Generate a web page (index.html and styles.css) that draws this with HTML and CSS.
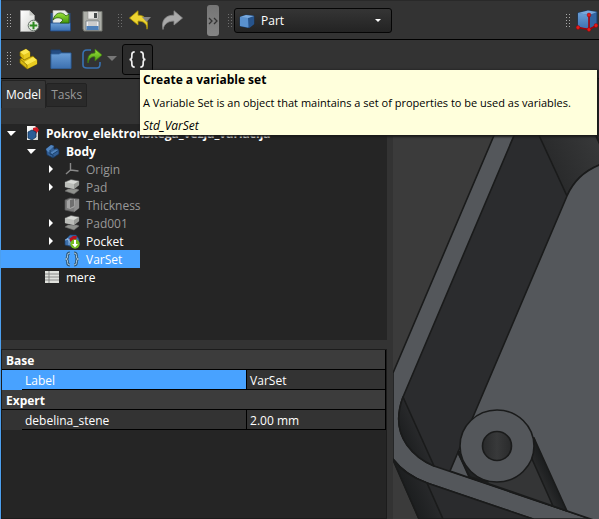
FILE: index.html
```html
<!DOCTYPE html>
<html lang="en">
<head>
<meta charset="utf-8">
<meta name="viewport" content="width=device-width, initial-scale=1">
<title>Part workbench</title>
<link rel="stylesheet" href="styles.css">
</head>
<body>
<svg class="defs" aria-hidden="true">
  <defs>
    <linearGradient id="paper" x1="0" y1="0" x2="1" y2="1"><stop offset="0" stop-color="#fff"/><stop offset="1" stop-color="#d2d4d0"/></linearGradient>
    <linearGradient id="blue" x1="0" y1="0" x2="0" y2="1"><stop offset="0" stop-color="#6a9ed6"/><stop offset="1" stop-color="#3c70b0"/></linearGradient>
    <linearGradient id="green" x1="0" y1="0" x2="0" y2="1"><stop offset="0" stop-color="#9be33b"/><stop offset="1" stop-color="#43960b"/></linearGradient>
    <symbol id="pad" viewBox="0 0 16 16">
      <path d="M1 12l3-2h9l2 1-5 4z" fill="#8f918d" stroke="#6b6b6b" stroke-width=".6"/>
      <path d="M1 3l6-2.500 8 1.500v4l-5 4-9-2z" fill="#d8dad6" stroke="#555" stroke-width=".6"/>
      <path d="M1 3l9 2v5l-9-2z" fill="#bbbdb9"/><path d="M10 5l5-3v4l-5 4z" fill="#999b97"/>
    </symbol>
  </defs>
</svg>

<header class="toolbars">
  <div class="toolbar">
    <div class="group">
      <span class="handle"></span>
      <button class="tool" aria-label="New"><svg viewBox="0 0 22 22"><path d="M2.500.500h9l5 5v16h-14z" fill="url(#paper)" stroke="#aaa" stroke-width=".6"/><path d="M11.500.500v5h5z" fill="#c3c5c1"/><circle cx="15.500" cy="15.500" r="5.300" fill="#e4e8df" stroke="#66736a"/><path d="M15.500 11.700v7.600M11.700 15.500h7.600" stroke="#2c8a1f" stroke-width="2"/></svg></button>
      <button class="tool" aria-label="Open"><svg viewBox="0 0 22 22"><path d="M.500 3h20v17H.500z" fill="#284f82"/><path d="M3 .500h12l4 4V15H3z" fill="#e9ebe8" stroke="#aaa" stroke-width=".6"/><path d="M.500 13h20v8H.500z" fill="url(#blue)" stroke="#204a87" stroke-width=".8"/><path d="M3 10C5 2 12 1 16 6l3-2v9h-9l3-3C10 7 6 7 3 10z" fill="url(#green)" stroke="#285d10" stroke-width=".8"/></svg></button>
      <button class="tool" aria-label="Save"><svg viewBox="0 0 22 22"><path d="M1 1.500h19V21H2l-1-2z" fill="#adafa9" stroke="#72746f"/><path d="M6 1.500h10V9H6z" fill="#e8e8e5" stroke="#888" stroke-width=".5"/><path d="M12 3h3v5h-3z" fill="#45494a"/><path d="M4 11h13v9H4z" fill="#eee" stroke="#707982" stroke-width=".8"/><path d="M4.500 16h12v4h-12z" fill="#4e80b9"/><path d="M6 13h9M6 15h9" stroke="#aaa"/></svg></button>
    </div>
    <div class="group">
      <span class="handle dim"></span>
      <button class="tool" aria-label="Undo"><svg viewBox="0 0 22 22"><path d="M.500 8L9 .800v4.400c7 0 11 5 9 14C18 14 15 11 9 11v4z" fill="#edd431" stroke="#b49b05" stroke-width=".8"/><path d="M13 7h9l-4.500 5z" fill="#858585"/></svg></button>
      <button class="tool" aria-label="Redo"><svg viewBox="0 0 22 22"><path d="M21.500 8L13 .800v4.400C4 5 0 11 2 19.500 3 14 7 11 13 11v4z" fill="#aaa" stroke="#888" stroke-width=".8"/></svg></button>
    </div>
    <button class="more" aria-label="More tools"><svg viewBox="0 0 12 8"><path d="M2 1l3 3-3 3M7 1l3 3-3 3" fill="none" stroke="#333" stroke-width="1.300"/></svg></button>
    <div class="group workbench">
      <span class="handle dim"></span>
      <div class="combo">
        <svg class="combo-icon" viewBox="0 0 16 14"><path d="M1 3l6-2 8 1v8l-5 4-9-2z" fill="#3f75b5" stroke="#193f70" stroke-width=".7"/><path d="M1 3l8 1v9.500L1 12z" fill="#5991cf"/><path d="M9 4l6-2v8l-5 3.500z" fill="#27548c"/><path d="M1 3l6-2 8 1-6 2z" fill="#7babdf"/></svg>
        <select aria-label="Workbench"><option>Part</option></select>
      </div>
    </div>
    <div class="group primitives">
      <span class="handle"></span>
      <button class="tool" aria-label="Box"><svg viewBox="0 0 22 22"><path d="M2 3l10-2.500L21 2v13l-8 4.500L2 17z" fill="#3265a2" stroke="#173d69"/><path d="M2 3l11 2v14L2 17z" fill="url(#blue)"/><path d="M2 3l10-2.500L21 2l-8 3z" fill="#79a8dc"/><path d="M2 17.500l11 2 7.500-4M13 5v14" fill="none" stroke="#a60008" stroke-width="1.600"/><g fill="#e51b1b" stroke="#8e0000" stroke-width=".5"><circle cx="13" cy="5" r="1.900"/><circle cx="2" cy="17.500" r="1.900"/><circle cx="13" cy="19.500" r="1.900"/><circle cx="20" cy="15.500" r="1.900"/></g></svg></button>
    </div>
  </div>

  <div class="toolbar second">
    <div class="group">
      <span class="handle"></span>
      <button class="tool" aria-label="Create part"><svg viewBox="0 0 22 22"><path d="M2 4l6-3 4 3v5l3-1 4 4v4L9 21l-7-6v-4l2-1-2-2z" fill="#d8b912" stroke="#796400" stroke-width=".8"/><path d="M2 4l6-3 4 3-6 3zM6 14l9-5 4 3-10 5z" fill="#fbe750"/><path d="M6 7l6-3v5l-6 3zM9 17l10-5v4L9 21z" fill="#e8cb20"/><path d="M2 8l4 4 6-3M2 11l7 6v4" fill="none" stroke="#826c00" stroke-width=".7"/></svg></button>
      <button class="tool" aria-label="Create group"><svg viewBox="0 0 22 22"><path d="M1 2h9l2 3h9v15H1z" fill="#244d83" stroke="#1d416e"/><path d="M1 6h8l2-1h10v15.500H1z" fill="url(#blue)" stroke="#315f98" stroke-width=".8"/></svg></button>
      <button class="tool" aria-label="Make link"><svg viewBox="0 0 22 22"><path d="M9 2H5Q1 2 1 6v11q0 3 4 3h10q3 0 3-4v-2" fill="none" stroke="#3872b2" stroke-width="1.600"/><path d="M6 15C5 8 8 5 13 5V1l7 6-7 6V9c-3-1-6 1-7 6z" fill="url(#green)" stroke="#3f7812" stroke-width=".8"/></svg></button>
      <svg class="drop" viewBox="0 0 10 6" aria-hidden="true"><path d="M0 0h10L5 5z" fill="#777"/></svg>
      <button class="tool active" aria-label="Create a variable set"><svg viewBox="0 0 18 18"><path d="M6 1Q3 1 3 4v2q0 3-2.500 3Q3 9 3 12v2q0 3 3 3M12 1q3 0 3 3v2q0 3 2.500 3Q15 9 15 12v2q0 3-3 3" fill="none" stroke="#eee" stroke-width="1.800"/></svg></button>
    </div>
  </div>
</header>

<main class="workspace">
  <section class="side">
    <div class="tabs" role="tablist">
      <button class="tab current" role="tab" aria-selected="true">Model</button>
      <button class="tab" role="tab" aria-selected="false">Tasks</button>
    </div>
    <ul class="tree">
      <li class="root"><span class="arrow open"></span><svg viewBox="0 0 16 16"><path d="M3 1h8l3 3v11H3z" fill="url(#paper)"/><path d="M9 3l4-1 2 3-3 4-3-1z" fill="#d11c25"/><path d="M4 7l4-2 4 2v5l-4 3-4-2z" fill="#2b5d96" stroke="#143657" stroke-width=".8"/></svg><b>Pokrov_elektronskega_vezja_variacija</b></li>
      <li class="child"><span class="arrow open"></span><svg viewBox="0 0 16 16"><path d="M2 6l5-4 3 1v3l3-1 2 2v4l-6 4-6-3z" fill="#325f95" stroke="#152f50" stroke-width=".8"/><path d="M2 6l5-4 3 1-4 4v3l5-3 4 0-6 4-6-3z" fill="#5386bf"/><path d="M6 7v4l3 1v3M9 11l6-4" fill="none" stroke="#1b4069"/></svg><b>Body</b></li>
      <li class="leaf"><span class="arrow"></span><svg viewBox="0 0 16 16"><path d="M6.500 2v7L2 13M6.500 9l8 1" fill="none" stroke="#888" stroke-width="1.400"/></svg><span class="label">Origin</span></li>
      <li class="leaf"><span class="arrow"></span><svg><use href="#pad"/></svg><span class="label">Pad</span></li>
      <li class="leaf"><span class="arrow none"></span><svg viewBox="0 0 16 16"><path d="M1 3l5-2 9 1v9l-5 4-9-2z" fill="#7c7c7c" stroke="#555" stroke-width=".7"/><path d="M3 4l3-2h5v8l-5 2-3-1z" fill="#a4a4a4"/><path d="M6 3l4-1v7l-4 2z" fill="#6f6f6f"/><path d="M11 4l4-2v9l-5 4z" fill="#8e8e8e"/></svg><span class="label">Thickness</span></li>
      <li class="leaf"><span class="arrow"></span><svg><use href="#pad"/></svg><span class="label">Pad001</span></li>
      <li class="leaf bright"><span class="arrow"></span><svg viewBox="0 0 16 16"><path d="M1 7l5-5 6 0 3 4v6L9 14l-8-2z" fill="#3c70ad" stroke="#183d6c" stroke-width=".7"/><path d="M5 6l4-3h4l-1 4-5 2z" fill="#b8131e"/><path d="M1 7l4-1v6M3 5l4 6" fill="none" stroke="#8db5df"/><circle cx="11" cy="11" r="4.700" fill="#75bd20"/><path d="M10 7h2v4h2l-3 3.500L8 11h2z" fill="#fff"/></svg><span class="label">Pocket</span></li>
      <li class="leaf bright selected"><span class="arrow none"></span><svg viewBox="0 0 16 16"><path d="M6 2Q3.500 2 3.500 4.500v1.500q0 2-2 2 2 0 2 2v1.500Q3.500 14 6 14M10 2q2.500 0 2.500 2.500V6q0 2 2 2-2 0-2 2v1.500q0 2.500-2.500 2.500" fill="none" stroke="#315b7d" stroke-width="2.800"/><path d="M6 2Q3.500 2 3.500 4.500v1.500q0 2-2 2 2 0 2 2v1.500Q3.500 14 6 14M10 2q2.500 0 2.500 2.500V6q0 2 2 2-2 0-2 2v1.500q0 2.500-2.500 2.500" fill="none" stroke="#a9c6d9"/></svg><span class="label">VarSet</span></li>
      <li class="child bright"><span class="arrow none"></span><svg viewBox="0 0 16 16"><path d="M1 2h14v12H1z" fill="#e0e2dd"/><path d="M1 5h14M1 8h14M1 11h14M5 2v12" stroke="#777" stroke-width=".8"/></svg><span class="label">mere</span></li>
    </ul>
    <div class="properties">
      <table>
        <colgroup><col class="name-col"><col></colgroup>
        <tbody>
          <tr><th colspan="2" scope="rowgroup">Base</th></tr>
          <tr class="chosen"><td class="name"><span>Label</span></td><td>VarSet</td></tr>
          <tr><th colspan="2" scope="rowgroup">Expert</th></tr>
          <tr><td class="name"><span>debelina_stene</span></td><td>2.00 mm</td></tr>
        </tbody>
      </table>
    </div>
  </section>

  <section class="viewport" aria-label="3D view">
    <svg viewBox="393 79 206 440" preserveAspectRatio="xMinYMin slice">
      <defs>
        <linearGradient id="corner" gradientUnits="userSpaceOnUse" x1="554" y1="165" x2="596" y2="145"><stop offset="0" stop-color="#2a2b2c"/><stop offset="1" stop-color="#363738"/></linearGradient>
        <linearGradient id="bend" gradientUnits="userSpaceOnUse" x1="396" y1="438" x2="421" y2="427"><stop offset="0" stop-color="#191b1c"/><stop offset="1" stop-color="#2b2c2e"/></linearGradient>
        <linearGradient id="outside" gradientUnits="userSpaceOnUse" x1="402" y1="491" x2="431" y2="479"><stop offset="0" stop-color="#1a1c1d"/><stop offset="1" stop-color="#2a2b2d"/></linearGradient>
        <linearGradient id="post" gradientUnits="userSpaceOnUse" x1="536" y1="482" x2="550" y2="475"><stop offset="0" stop-color="#303132"/><stop offset="1" stop-color="#1c1e1f"/></linearGradient>
        <linearGradient id="hole" x1="0" y1="0" x2="1" y2="0"><stop offset="0" stop-color="#292a2b"/><stop offset=".5" stop-color="#38393a"/><stop offset="1" stop-color="#292a2b"/></linearGradient>
      </defs>
      <path d="M393 79h206v440H393z" fill="#3b3b3b"/>
      <g stroke="#1a1b1b" stroke-width="1.600" stroke-linejoin="round">
        <path d="M518 79L393 373V459Q405 475 427 483L533 519H620V79z" fill="#54575b"/>
        <path d="M538 79L403 397C396 416 397 431 407 445Q417 459 434 466L620 529V79z" fill="#2b2c2e"/>
        <path d="M513 79L567 196Q577 173 602 164V148L571 79z" fill="url(#corner)"/>
        <path d="M596 136l6 13" fill="none"/>
        <path d="M620 79V529L450 471L567 196Q577 173 602 164L620 79z" fill="#54575b" stroke="none"/>
        <path d="M620 529L450 471L567 196Q577 173 602 164" fill="none"/>
        <path d="M403 397C396 416 397 431 407 445Q417 459 434 466z" fill="url(#bend)"/>
        <path d="M458 452L469 477L553 506L534 438z" fill="#343536"/>
        <path d="M534 438L567 511L553 506L532 459z" fill="url(#post)"/>
        <path d="M459 452l-1 1 12 24 18 5z" fill="#202223"/>
        <ellipse cx="497" cy="446" rx="37" ry="36" fill="#54575b"/>
        <circle cx="497" cy="446" r="14.500" fill="url(#hole)"/>
        <path d="M393 459Q405 475 427 483L533 519H419z" fill="#2a2b2d"/>
        <path d="M393 460Q405 475 427 483L443 519H419z" fill="url(#outside)"/>
      </g>
    </svg>
  </section>
</main>

<div class="tooltip" role="tooltip">
  <b>Create a variable set</b>
  <span>A Variable Set is an object that maintains a set of properties to be used as variables.</span>
  <i>Std_VarSet</i>
</div>
</body>
</html>
```
FILE: styles.css
```css
* { box-sizing: border-box; }

body {
  margin: 0;
  height: 100vh;
  display: flex;
  flex-direction: column;
  position: relative;
  overflow: hidden;
  background: #333;
  border-left: 1px solid #4c9fee;
  color: #fff;
  font: 12px/18px "Open Sans", "Noto Sans", sans-serif;
}

button, select { font: inherit; color: inherit; }
button { border: 0; padding: 0; background: none; }
.defs { position: absolute; width: 0; height: 0; }

/* Toolbars */
.toolbar {
  display: flex;
  align-items: center;
  height: 40px;
  padding: 2px 0 0 5px;
  border-bottom: 1px solid #000;
  box-shadow: inset 0 1px #292929;
}
.toolbar.second { height: 39px; padding-top: 0; box-shadow: none; }
.group { display: flex; align-items: center; }
.group + .group { margin-left: 13px; }
.handle {
  width: 6px;
  height: 16px;
  margin-right: 6px;
  background: radial-gradient(circle, #aaa 1px, transparent 1px) 0 0 / 3px 3px;
}
.handle.dim { opacity: .5; }
.tool { width: 22px; height: 22px; flex: none; }
.tool + .tool { margin-left: 10px; }
.tool svg { display: block; width: 100%; height: 100%; }
.more {
  width: 12px;
  height: 31px;
  margin-left: 24px;
  border-radius: 3px;
  background: linear-gradient(#757575, #858585);
}
.more svg { display: block; width: 12px; height: 8px; }
.group.workbench { margin-left: 8px; }
.workbench .handle { margin-right: 1px; }
.group.primitives { margin-left: auto; padding-right: 1px; }
.primitives .handle { margin-right: 5px; }
.combo {
  display: flex;
  align-items: center;
  position: relative;
  width: 158px;
  height: 25px;
  border: 1px solid #050505;
  border-radius: 3px;
  background: linear-gradient(#353535, #232323);
}
.combo-icon { position: absolute; left: 4px; width: 16px; height: 14px; pointer-events: none; }
.combo select {
  width: 100%;
  height: 100%;
  padding: 0 0 0 26px;
  border: 0;
  appearance: none;
  background: none;
}
.combo::after {
  content: "";
  position: absolute;
  right: 10px;
  border: 3px solid transparent;
  border-top-color: #fff;
  border-bottom: 0;
  pointer-events: none;
}
.drop { width: 10px; height: 6px; margin: 0 5px 0 3px; }
.tool.active {
  width: 31px;
  height: 31px;
  padding: 6px;
  border: 1px solid #050505;
  border-radius: 3px;
  background: #2b2b2b;
}

/* Side panel */
.workspace { flex: 1; min-height: 0; display: grid; grid-template-columns: 386px 1fr; column-gap: 6px; }
.side { display: flex; flex-direction: column; min-height: 0; }
.tabs { display: flex; align-items: flex-start; height: 45px; }
.tab {
  height: 24px;
  margin-top: 4px;
  padding: 0 4px;
  border: 1px solid #222;
  border-radius: 2px 2px 0 0;
  background: #2a2a2a;
  color: #999;
}
.tab.current { height: 28px; margin-top: 1px; background: #373737; color: #fff; border-bottom: 0; }
.tree { flex: none; height: 216px; margin: 0; padding: 0; list-style: none; background: #252525; color: #999; }
.tree li { display: flex; align-items: center; height: 18px; white-space: nowrap; }
.tree svg { width: 16px; height: 16px; margin-right: 6px; flex: none; }
.root { padding-left: 3px; }
.child { padding-left: 23px; }
.leaf { padding-left: 43px; }
.bright, .tree b { color: #fff; }
.tree b, .label { padding-top: 2px; }
.tree .selected { width: 139px; background: #48a2ff; }
.arrow { flex: none; width: 14px; height: 10px; margin-right: 6px; background: #fff; clip-path: polygon(5px 1px, 9px 5px, 5px 9px); }
.arrow.open { clip-path: polygon(3px 3px, 12px 3px, 7px 8px); }
.arrow.none { visibility: hidden; }

/* Property editor */
.properties { flex: 1; margin-top: 9px; border: 1px solid #1c1c1c; background: #252525; }
table { width: 100%; border-collapse: separate; border-spacing: 0; table-layout: fixed; border-right: 1px solid #000; }
.name-col { width: 64%; }
th, td { height: 20px; padding: 3px 4px 0; line-height: 16px; text-align: left; border-bottom: 1px solid #000; }
th { background: #3c3c3c; font-weight: 700; }
td { background: #333; padding-left: 3px; }
td.name { padding: 0; border-bottom: 0; border-right: 1px solid #000; }
td.name span { display: block; height: 20px; margin-left: 20px; padding: 3px 0 0 3px; border-bottom: 1px solid #000; }
.chosen .name { background: #48a2ff; }

/* 3D view */
.viewport { min-width: 0; overflow: hidden; }
.viewport svg { display: block; width: 100%; height: 100%; }

.tooltip {
  position: absolute;
  top: 70px;
  left: 139px;
  width: 457px;
  height: 65px;
  padding: 1px 3px 0;
  display: flex;
  flex-direction: column;
  gap: 5px;
  background: #ffffdc;
  color: #000;
  white-space: nowrap;
  box-shadow: 1px 1px 2px 1px #1a1a1a;
}
.tooltip span { font-size: 11px; }
```
